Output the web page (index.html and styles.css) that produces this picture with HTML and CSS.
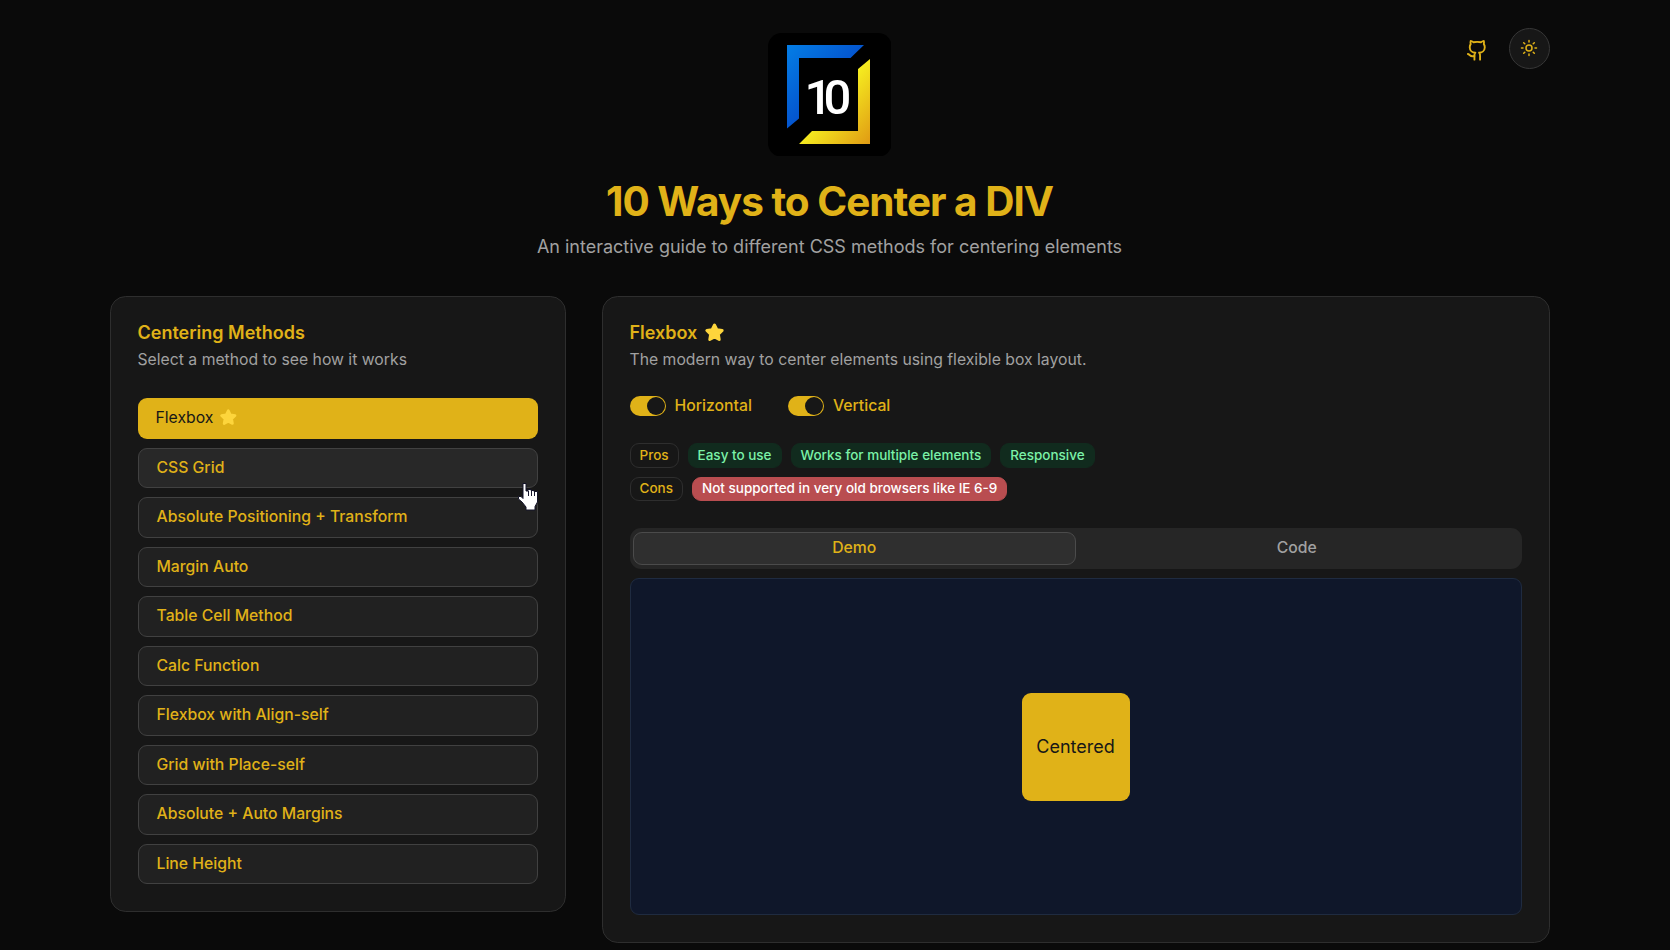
FILE: index.html
```html
<!DOCTYPE html>
<html lang="en">
<head>
<meta charset="utf-8">
<title>10 Ways to Center a DIV</title>
<link rel="stylesheet" href="styles.css">
</head>
<body>
<div class="page">
  <header class="hero">
    <svg class="logo" viewBox="0 0 123.750 123.750">
      <defs>
        <linearGradient id="blue" x1="0" y1="0" x2="0.65" y2="0.65"><stop offset="0" stop-color="#047ee6"/><stop offset="1" stop-color="#044ac8"/></linearGradient>
        <linearGradient id="gold" x1="0.4" y1="0.4" x2="1" y2="1"><stop offset="0.1" stop-color="#f6f020"/><stop offset="1" stop-color="#e09a14"/></linearGradient>
      </defs>
      <rect width="123.750" height="123.750" rx="13.500" fill="#000"/>
      <path d="M19 12H96L82.500 25H31V85.500L19 95.500Z" fill="url(#blue)"/>
      <path d="M102 26V111H31L44 98H90V36Z" fill="url(#gold)"/>
      <text class="logo-text" x="36.500 55.500" y="81">10</text>
    </svg>
    <h1 class="title">10 Ways to Center a DIV</h1>
    <p class="subtitle">An interactive guide to different CSS methods for centering elements</p>
    <nav class="actions">
      <a class="github" aria-label="GitHub"><svg viewBox="0 0 24 24"><path d="M15 22v-4a4.800 4.800 0 0 0-1-3.500c3 0 6-2 6-5.500.08-1.250-.27-2.480-1-3.500.28-1.150.28-2.350 0-3.500 0 0-1 0-3 1.500-2.640-.5-5.360-.5-8 0C6 2 5 2 5 2c-.3 1.150-.3 2.350 0 3.500A5.403 5.403 0 0 0 4 9c0 3.500 3 5.500 6 5.500-.39.490-.68 1.050-.85 1.650-.17.600-.22 1.230-.15 1.850v4"/><path d="M9 18c-4.510 2-5-2-7-2"/></svg></a>
      <button class="theme" aria-label="Toggle theme"><svg viewBox="0 0 24 24"><circle cx="12" cy="12" r="4"/><path d="M12 2v2M12 20v2M4.930 4.930l1.410 1.410M17.660 17.660l1.410 1.410M2 12h2M20 12h2M6.340 17.660l-1.410 1.410M19.070 4.930l-1.410 1.410"/></svg></button>
    </nav>
  </header>
  <main class="columns">
    <section class="card">
      <h2 class="card-title">Centering Methods</h2>
      <p class="card-text">Select a method to see how it works</p>
      <div class="methods">
        <button class="method selected">Flexbox <svg class="star" viewBox="0 0 24 24"><path d="M12 3.400L14.700 8.700L20.750 9.760L16.400 14.050L17.400 20.040L12 17.200L6.600 20.040L7.600 14.050L3.250 9.760L9.300 8.700Z"/></svg></button>
        <button class="method hovered">CSS Grid</button>
        <button class="method">Absolute Positioning + Transform</button>
        <button class="method">Margin Auto</button>
        <button class="method">Table Cell Method</button>
        <button class="method">Calc Function</button>
        <button class="method">Flexbox with Align-self</button>
        <button class="method">Grid with Place-self</button>
        <button class="method">Absolute + Auto Margins</button>
        <button class="method">Line Height</button>
      </div>
    </section>
    <section class="card">
      <h2 class="card-title">Flexbox <svg class="star" viewBox="0 0 24 24"><path d="M12 3.400L14.700 8.700L20.750 9.760L16.400 14.050L17.400 20.040L12 17.200L6.600 20.040L7.600 14.050L3.250 9.760L9.300 8.700Z"/></svg></h2>
      <p class="card-text">The modern way to center elements using flexible box layout.</p>
      <div class="switches">
        <label class="option"><span class="switch"></span>Horizontal</label>
        <label class="option"><span class="switch"></span>Vertical</label>
      </div>
      <div class="badges">
        <div class="badge-row"><span class="badge">Pros</span><span class="badge pro">Easy to use</span><span class="badge pro">Works for multiple elements</span><span class="badge pro">Responsive</span></div>
        <div class="badge-row"><span class="badge">Cons</span><span class="badge con">Not supported in very old browsers like IE 6-9</span></div>
      </div>
      <div class="tabs"><button class="tab active">Demo</button><button class="tab">Code</button></div>
      <div class="demo"><div class="box">Centered</div></div>
    </section>
  </main>
</div>
<svg class="pointer" viewBox="0 0 22 30"><path d="M6 1.500H9V9H11V7.500H14V8.500H17V9.500H20.500V20L18 24.500V28H9V25L5 20L1.500 17V14.500H4L6 16.500Z" fill="#fff" stroke="#15152a" stroke-width="1"/><path d="M11.500 9V14M14.500 9V14M17.500 10V14" stroke="#15152a" stroke-width="1"/></svg>
</body>
</html>
```
FILE: styles.css
```css
html { font-size: 18px; background: #0a0a0a; }
* { box-sizing: border-box; }
body { margin: 0; height: 950px; overflow: hidden; font-family: Inter, sans-serif; color: #e0b218; line-height: 1.5; }
h1, h2, p { margin: 0; }
button { font: inherit; color: inherit; }
.page { width: 1440px; margin-left: 109.500px; padding-top: 32.500px; }
.hero { position: relative; display: flex; flex-direction: column; align-items: center; margin-bottom: 36px; }
.logo { width: 123.750px; height: 123.750px; display: block; }
.logo-text { font-family: Roboto, sans-serif; font-size: 49px; font-weight: 500; fill: #fff; }
.title { margin-top: 22.500px; font-size: 40.500px; line-height: 45px; font-weight: 700; letter-spacing: -0.025em; }
.subtitle { margin-top: 9px; font-size: 18px; line-height: 27px; color: #a1a1a1; }
.actions { position: absolute; top: -4.500px; right: 0; display: flex; align-items: center; gap: 20.500px; }
.actions svg { display: block; fill: none; stroke: #e0b218; stroke-width: 2; stroke-linecap: round; stroke-linejoin: round; }
.github { padding-top: 3px; }
.github svg { width: 22.500px; height: 22.500px; }
.theme { width: 41px; height: 41px; padding: 0 1px 1px 0; border: 1px solid #373737; border-radius: 50%; background: #171717; display: grid; place-items: center; }
.theme svg { width: 18px; height: 18px; }
.columns { display: grid; grid-template-columns: 456px 948px; gap: 36px; align-items: start; }
.card { padding: 27px; border: 1px solid #2e2e2e; border-radius: 15.750px; background: #171717; }
.card-title { display: flex; align-items: center; gap: 6.500px; height: 18px; font-size: 18px; line-height: 18px; font-weight: 600; }
.card-text { margin-top: 6.750px; font-size: 15.750px; line-height: 22.500px; color: #a1a1a1; }
.star { width: 21px; height: 21px; fill: #fdd53c; stroke: #fdd53c; stroke-width: 3.400; stroke-linejoin: round; }
.methods { display: flex; flex-direction: column; gap: 9px; margin-top: 27px; }
.method { display: flex; align-items: center; gap: 6px; height: 40.500px; padding: 0 18px; border: 1px solid #414141; border-radius: 9px; background: #212121; font-size: 15.750px; line-height: 22.500px; font-weight: 500; text-align: left; }
.method.hovered { background: #282828; }
.method.selected { border: 0; background: #e0b218; color: #171717; font-weight: 400; }
.method .star { width: 18.600px; height: 18.600px; margin-bottom: 1px; }
.switches { display: flex; gap: 36px; margin-top: 23.500px; }
.option { display: flex; align-items: center; gap: 9px; height: 22.500px; font-size: 15.750px; font-weight: 500; }
.switch { display: flex; justify-content: flex-end; align-items: center; width: 36px; height: 20px; padding: 1px; border-radius: 10px; background: #e0b218; }
.switch::before { content: ""; width: 18px; height: 18px; border-radius: 50%; background: #171717; }
.badges { display: flex; flex-direction: column; gap: 9px; margin-top: 26px; }
.badge-row { display: flex; gap: 9px; }
.badge { height: 24.500px; padding: 1.750px 9px 0; border: 1px solid #2e2e2e; border-radius: 9px; font-size: 13.500px; line-height: 18px; font-weight: 500; }
.badge.pro { border-color: #112b1e; background: #112b1e; color: #7bf1a8; }
.badge.con { border-color: #b94d50; background: #b94d50; color: #fff; }
.tabs { display: flex; height: 40.500px; margin-top: 27px; padding: 3.800px 3.400px; border-radius: 11.250px; background: #262626; }
.tab { flex: 1; padding: 0; border: 1px solid transparent; border-radius: 9px; background: transparent; color: #a1a1a1; font-size: 15.750px; font-weight: 500; }
.tab.active { border-color: #4b4b4b; background: #2f2f2f; color: #e0b218; }
.demo { display: flex; align-items: center; justify-content: center; height: 337.500px; margin-top: 9px; padding-top: 1px; border: 1px solid #1f2b40; border-radius: 9px; background: #0f172a; }
.box { display: grid; place-items: center; width: 108px; height: 108px; border-radius: 9px; background: #e0b218; color: #171717; font-size: 18px; }
.pointer { position: absolute; left: 517px; top: 482px; width: 22px; height: 30px; }
```
